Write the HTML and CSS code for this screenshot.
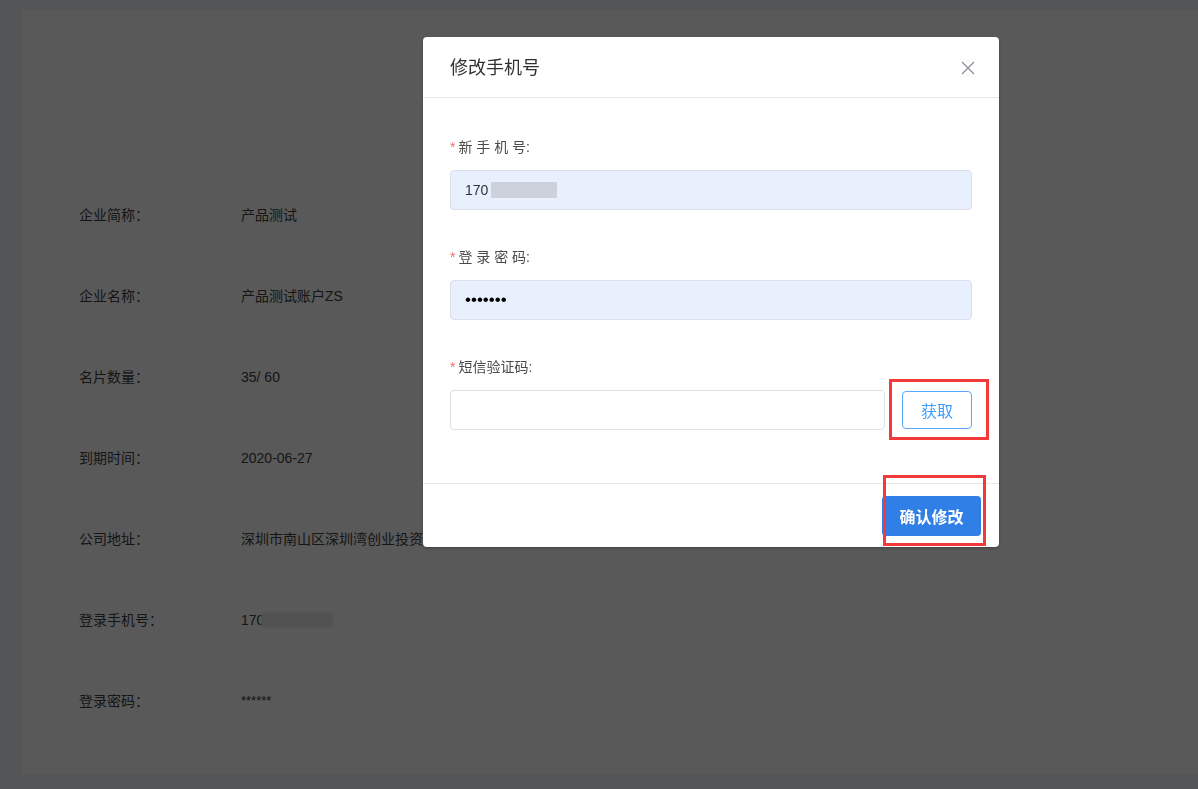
FILE: index.html
```html
<!DOCTYPE html>
<html lang="zh-CN">
<head>
<meta charset="utf-8">
<title>修改手机号</title>
<link rel="stylesheet" href="styles.css">
</head>
<body>
<div class="page">
  <div class="card">
    <div class="info-row"><span class="info-label">企业简称：</span><span class="info-value">产品测试</span></div>
    <div class="info-row"><span class="info-label">企业名称：</span><span class="info-value">产品测试账户ZS</span></div>
    <div class="info-row"><span class="info-label">名片数量：</span><span class="info-value">35/ 60</span></div>
    <div class="info-row"><span class="info-label">到期时间：</span><span class="info-value">2020-06-27</span></div>
    <div class="info-row"><span class="info-label">公司地址：</span><span class="info-value">深圳市南山区深圳湾创业投资大厦</span></div>
    <div class="info-row"><span class="info-label">登录手机号：</span><span class="info-value">170<span class="bg-mosaic"></span></span></div>
    <div class="info-row"><span class="info-label">登录密码：</span><span class="info-value stars">******</span></div>
  </div>
</div>

<div class="mask">
  <div class="dialog">
    <div class="dialog-header">
      <span class="dialog-title">修改手机号</span>
      <span class="dialog-close">
        <svg width="14" height="14" viewBox="0 0 14 14"><path d="M1 1 L13 13 M13 1 L1 13" stroke="#909399" stroke-width="1.4" fill="none"/></svg>
      </span>
    </div>
    <div class="dialog-body">
      <div class="form-item">
        <div class="form-label"><span class="req">*</span>新 手 机 号:</div>
        <div class="input filled"><span>170</span><span class="mosaic"></span></div>
      </div>
      <div class="form-item">
        <div class="form-label"><span class="req">*</span>登 录 密 码:</div>
        <div class="input filled"><span class="dots">•••••••</span></div>
      </div>
      <div class="form-item">
        <div class="form-label"><span class="req">*</span>短信验证码:</div>
        <div class="code-row">
          <div class="input code-input"></div>
          <button class="btn-get">获取</button>
        </div>
      </div>
    </div>
    <div class="dialog-footer">
      <button class="btn-primary">确认修改</button>
    </div>
    <div class="mark mark-get"></div>
    <div class="mark mark-confirm"></div>
  </div>
</div>
</body>
</html>
```
FILE: styles.css
```css
html, body {
  margin: 0;
  height: 100%;
  overflow: hidden;
}
body {
  background: #f0f2f5;
  font-family: "Liberation Sans", "Noto Sans CJK SC", sans-serif;
  font-size: 14px;
}
.page {
  padding: 10px 0 0 22px;
}
.card {
  background: #ffffff;
  height: 763px;
  box-sizing: border-box;
  padding: 164px 0 0 57px;
}
.info-row {
  display: flex;
  align-items: center;
  height: 81px;
  line-height: 20px;
  color: #404040;
}
.info-label {
  width: 162px;
  flex: none;
}
.info-value {
  display: flex;
  align-items: center;
  white-space: nowrap;
}
.bg-mosaic {
  display: inline-block;
  width: 72px;
  height: 16px;
  margin-left: -3px;
  background: #ececec;
  filter: blur(1px);
}
.stars {
  font-size: 13px;
  align-items: flex-start;
  height: 20px;
}

.mask {
  position: fixed;
  inset: 0;
  background: rgba(0, 0, 0, 0.65);
}
.dialog {
  position: relative;
  width: 576px;
  margin: 37px 0 0 423px;
  background: #ffffff;
  border-radius: 4px;
  box-shadow: 0 1px 3px rgba(0, 0, 0, 0.3);
}
.dialog-header {
  display: flex;
  align-items: center;
  justify-content: space-between;
  padding: 2px 24px 0 27px;
  box-sizing: border-box;
  border-bottom: 1px solid #e8e8e8;
  height: 61px;
}
.dialog-title {
  font-size: 18px;
  line-height: 24px;
  color: #303133;
}
.dialog-close {
  display: flex;
  width: 14px;
  height: 14px;
}
.dialog-body {
  padding: 39px 27px 53px;
}
.form-item + .form-item {
  margin-top: 37px;
}
.form-label {
  line-height: 20px;
  margin-bottom: 13px;
  color: #4a4a4a;
}
.req {
  color: #f56c6c;
  margin-right: 3px;
}
.input {
  height: 40px;
  box-sizing: border-box;
  border: 1px solid #dcdfe6;
  border-radius: 4px;
  padding: 0 14px;
  display: flex;
  align-items: center;
  color: #303133;
  background: #ffffff;
}
.input.filled {
  background: #e8f0fe;
}
.mosaic {
  display: inline-block;
  width: 66px;
  height: 16px;
  margin-left: 3px;
  background: #cdd1dc;
  filter: blur(0.6px);
}
.dots {
  font-size: 17px;
  color: #000;
}
.code-row {
  display: flex;
  align-items: flex-start;
  gap: 17px;
}
.code-input {
  width: 435px;
  flex: none;
}
.btn-get {
  width: 73px;
  height: 38px;
  margin-top: 1px;
  box-sizing: border-box;
  border: 1px solid #5aa9ff;
  border-radius: 4px;
  background: #ffffff;
  color: #409eff;
  font-family: inherit;
  font-size: 16px;
  padding: 0;
}
.dialog-footer {
  border-top: 1px solid #e8e8e8;
  padding: 12px 18px 11px;
  display: flex;
  justify-content: flex-end;
}
.btn-primary {
  width: 99px;
  height: 40px;
  border: 0;
  border-radius: 4px;
  background: #2f7fe6;
  color: #ffffff;
  font-family: inherit;
  font-size: 16px;
  font-weight: bold;
  padding: 0;
}
.mark {
  position: absolute;
  border: 3px solid #f23a3a;
  box-sizing: border-box;
}
.mark-get {
  left: 466px;
  top: 342px;
  width: 100px;
  height: 61px;
}
.mark-confirm {
  left: 460px;
  top: 438px;
  width: 103px;
  height: 71px;
}
```
